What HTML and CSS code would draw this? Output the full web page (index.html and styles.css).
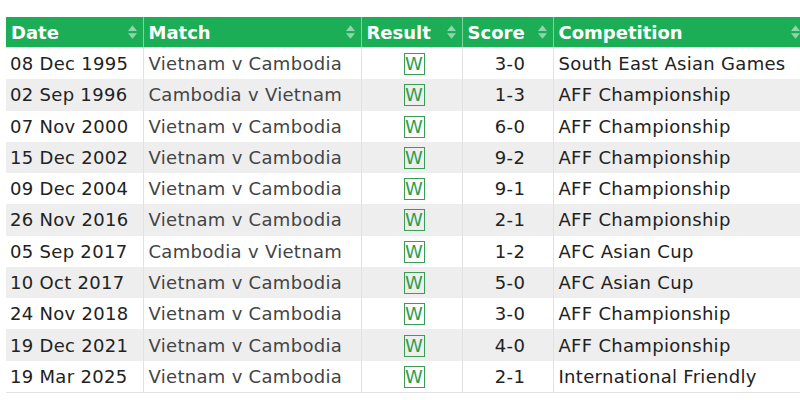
FILE: index.html
```html
<!DOCTYPE html>
<html>
<head>
<meta charset="utf-8">
<link rel="stylesheet" href="styles.css">
</head>
<body>
<table class="results">
  <colgroup>
    <col class="c-date"><col class="c-match"><col class="c-result"><col class="c-score"><col class="c-comp">
  </colgroup>
  <thead>
    <tr>
      <th><div class="th-in"><span>Date</span><svg class="sort" viewBox="0 0 8 12"><path d="M4 0 L8 5 H0 Z M4 12 L8 7 H0 Z"/></svg></div></th>
      <th><div class="th-in"><span>Match</span><svg class="sort" viewBox="0 0 8 12"><path d="M4 0 L8 5 H0 Z M4 12 L8 7 H0 Z"/></svg></div></th>
      <th><div class="th-in"><span>Result</span><svg class="sort" viewBox="0 0 8 12"><path d="M4 0 L8 5 H0 Z M4 12 L8 7 H0 Z"/></svg></div></th>
      <th><div class="th-in"><span>Score</span><svg class="sort" viewBox="0 0 8 12"><path d="M4 0 L8 5 H0 Z M4 12 L8 7 H0 Z"/></svg></div></th>
      <th><div class="th-in"><span>Competition</span><svg class="sort" viewBox="0 0 8 12"><path d="M4 0 L8 5 H0 Z M4 12 L8 7 H0 Z"/></svg></div></th>
    </tr>
  </thead>
  <tbody>
    <tr><td class="date">08 Dec 1995</td><td class="match">Vietnam v Cambodia</td><td class="res"><span class="w">W</span></td><td class="score">3-0</td><td class="comp">South East Asian Games</td></tr>
    <tr><td class="date">02 Sep 1996</td><td class="match">Cambodia v Vietnam</td><td class="res"><span class="w">W</span></td><td class="score">1-3</td><td class="comp">AFF Championship</td></tr>
    <tr><td class="date">07 Nov 2000</td><td class="match">Vietnam v Cambodia</td><td class="res"><span class="w">W</span></td><td class="score">6-0</td><td class="comp">AFF Championship</td></tr>
    <tr><td class="date">15 Dec 2002</td><td class="match">Vietnam v Cambodia</td><td class="res"><span class="w">W</span></td><td class="score">9-2</td><td class="comp">AFF Championship</td></tr>
    <tr><td class="date">09 Dec 2004</td><td class="match">Vietnam v Cambodia</td><td class="res"><span class="w">W</span></td><td class="score">9-1</td><td class="comp">AFF Championship</td></tr>
    <tr><td class="date">26 Nov 2016</td><td class="match">Vietnam v Cambodia</td><td class="res"><span class="w">W</span></td><td class="score">2-1</td><td class="comp">AFF Championship</td></tr>
    <tr><td class="date">05 Sep 2017</td><td class="match">Cambodia v Vietnam</td><td class="res"><span class="w">W</span></td><td class="score">1-2</td><td class="comp">AFC Asian Cup</td></tr>
    <tr><td class="date">10 Oct 2017</td><td class="match">Vietnam v Cambodia</td><td class="res"><span class="w">W</span></td><td class="score">5-0</td><td class="comp">AFC Asian Cup</td></tr>
    <tr><td class="date">24 Nov 2018</td><td class="match">Vietnam v Cambodia</td><td class="res"><span class="w">W</span></td><td class="score">3-0</td><td class="comp">AFF Championship</td></tr>
    <tr><td class="date">19 Dec 2021</td><td class="match">Vietnam v Cambodia</td><td class="res"><span class="w">W</span></td><td class="score">4-0</td><td class="comp">AFF Championship</td></tr>
    <tr><td class="date">19 Mar 2025</td><td class="match">Vietnam v Cambodia</td><td class="res"><span class="w">W</span></td><td class="score">2-1</td><td class="comp">International Friendly</td></tr>
  </tbody>
</table>
</body>
</html>
```
FILE: styles.css
```css
html, body {
  margin: 0;
  padding: 0;
  background: #fff;
  overflow: hidden;
}
body {
  padding: 17px 0 0 6px;
  font-family: "DejaVu Sans", Verdana, sans-serif;
  font-size: 18px;
  letter-spacing: 0.3px;
  color: #222;
}
.results {
  border-collapse: collapse;
  table-layout: fixed;
  width: 800px;
}
.c-date { width: 137px; }
.c-match { width: 218px; }
.c-result { width: 101px; }
.c-score { width: 91px; }
.c-comp { width: 253px; }

.results th {
  background: #1cae57;
  color: #fff;
  font-weight: bold;
  letter-spacing: 0;
  text-align: left;
  height: 30px;
  padding: 0;
  border-left: 1px solid #7fd3a0;
  border-bottom: 1px solid #dcdcdc;
}
.results th:first-child { border-left: none; }
.th-in {
  display: flex;
  align-items: center;
  justify-content: space-between;
  padding: 0 6px 0 5px;
}
.sort {
  width: 9px;
  height: 14px;
  fill: rgba(255, 255, 255, 0.5);
}
.results td {
  height: 31.27px;
  padding: 0 0 0 5px;
  border-left: 1px solid #e2e2e2;
  white-space: nowrap;
  overflow: hidden;
}
.results td:first-child { border-left: none; padding-left: 4px; }
.results tbody tr:nth-child(even) td { background: #eeeeee; }
.results tbody tr:last-child td { border-bottom: 1px solid #e2e2e2; }
.match { color: #444; }
.res { text-align: center; }
.score { text-align: center; }
.w {
  display: inline-block;
  box-sizing: border-box;
  width: 21px;
  height: 22px;
  line-height: 20px;
  border: 1px solid #3a9d55;
  color: #2e9d4c;
  font-size: 18px;
  letter-spacing: 0;
  text-align: center;
  vertical-align: middle;
}
```
